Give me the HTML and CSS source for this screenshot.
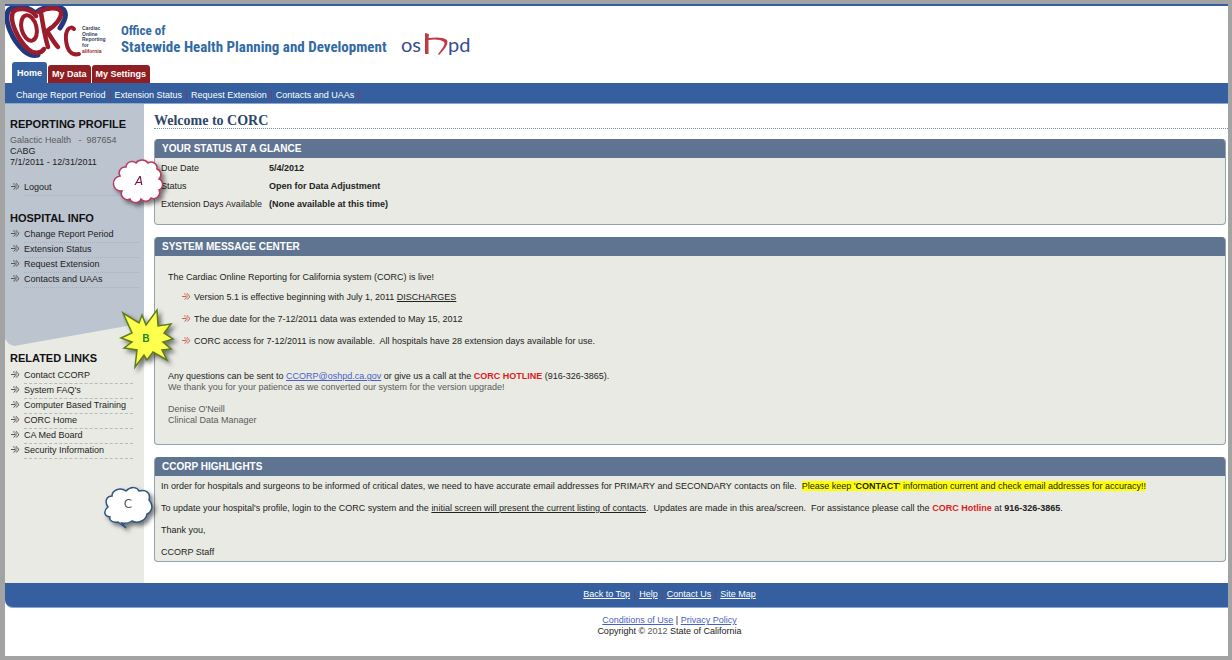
FILE: index.html
```html
<!DOCTYPE html>
<html lang="en">
<head>
<meta charset="utf-8">
<title>CORC - Home</title>
<link rel="stylesheet" href="styles.css">
</head>
<body>
<svg class="defs" aria-hidden="true">
  <symbol id="arrow" viewBox="0 0 9 7">
    <path d="M0 3.5H4" fill="none" stroke="currentColor" stroke-width="1"/>
    <path d="M2.500 .5L5.500 3.500L2.500 6.500M5 .5L8 3.500L5 6.500" fill="none" stroke="currentColor" stroke-width="1.200" stroke-dasharray="1 .6"/>
  </symbol>
</svg>
<div class="page">
  <header class="header">
    <svg class="logo" viewBox="0 0 106 52" role="img" aria-label="CORC logo">
      <g fill="none" stroke-linecap="round" stroke-linejoin="round">
        <path d="M29 6C22 0 7-1 3 5C-1 15 7 34 19 45C24 49 29 50 33 49" stroke="#22397f" stroke-width="5"/>
        <path d="M33 5C41 0 54-1 59 4C62 9 60 14 55 22" stroke="#22397f" stroke-width="5"/>
        <path d="M31 10C26 2 12 1 8 6C4 15 13 34 23 43C28 48 36 48 39 43" stroke="#9c1c2c" stroke-width="4.500"/>
        <ellipse cx="24" cy="22" rx="7.500" ry="13" transform="rotate(-14 24 22)" stroke="#9c1c2c" stroke-width="4"/>
        <path d="M36 7C38 18 39 27 43 41M34 6C43 1 54 1 56 6C57 12 50 20 42 25C46 31 49 37 53 41" stroke="#9c1c2c" stroke-width="4.500"/>
        <path d="M69 23C65 19 60 24 61 34C62 44 66 50 74 48" stroke="#9c1c2c" stroke-width="4"/>
      </g>
      <g class="logo-note">
        <text x="77" y="24">Cardiac</text>
        <text x="77" y="30">Online</text>
        <text x="77" y="35">Reporting</text>
        <text x="77" y="41">for</text>
        <text class="logo-state" x="77" y="47">alifornia</text>
      </g>
    </svg>
    <div class="office"><span class="office-of">Office of</span><span class="office-name">Statewide Health Planning and Development</span></div>
    <svg class="oshpd" viewBox="0 0 76 26" role="img" aria-label="oshpd">
      <text x="0" y="19">os</text>
      <path d="M24 0L28 1L27.500 5C34 4 43 4 46 7C48 11 43 17 38 22L37 21C41 16 45 11 43 9C40 6 32 6 27.500 7V21H24Z" fill="#c03a44"/>
      <text x="47" y="19">pd</text>
    </svg>
  </header>
  <nav class="tabs">
    <a class="tab tab-active" href="#">Home</a>
    <a class="tab" href="#">My Data</a>
    <a class="tab" href="#">My Settings</a>
  </nav>
  <nav class="subnav">
    <a href="#">Change Report Period</a>
    <a href="#">Extension Status</a>
    <a href="#">Request Extension</a>
    <a href="#">Contacts and UAAs</a>
  </nav>
  <div class="columns">
    <aside class="sidebar">
      <div class="profile">
        <h2>REPORTING PROFILE</h2>
        <p class="profile-text"><span class="muted">Galactic Health &nbsp; - &nbsp;987654</span><br>CABG<br>7/1/2011 - 12/31/2011</p>
        <ul class="links logout">
          <li><svg><use href="#arrow"/></svg><a href="#">Logout</a></li>
        </ul>
        <h2>HOSPITAL INFO</h2>
        <ul class="links">
          <li><svg><use href="#arrow"/></svg><a href="#">Change Report Period</a></li>
          <li><svg><use href="#arrow"/></svg><a href="#">Extension Status</a></li>
          <li><svg><use href="#arrow"/></svg><a href="#">Request Extension</a></li>
          <li><svg><use href="#arrow"/></svg><a href="#">Contacts and UAAs</a></li>
        </ul>
      </div>
      <div class="related">
        <h2>RELATED LINKS</h2>
        <ul class="links">
          <li><svg><use href="#arrow"/></svg><a href="#">Contact CCORP</a></li>
          <li><svg><use href="#arrow"/></svg><a href="#">System FAQ's</a></li>
          <li><svg><use href="#arrow"/></svg><a href="#">Computer Based Training</a></li>
          <li><svg><use href="#arrow"/></svg><a href="#">CORC Home</a></li>
          <li><svg><use href="#arrow"/></svg><a href="#">CA Med Board</a></li>
          <li><svg><use href="#arrow"/></svg><a href="#">Security Information</a></li>
        </ul>
      </div>
    </aside>
    <main class="main">
      <h1>Welcome to CORC</h1>
      <section class="panel">
        <h2>YOUR STATUS AT A GLANCE</h2>
        <div class="panel-body status">
          <table>
            <tr><th scope="row">Due Date</th><td>5/4/2012</td></tr>
            <tr><th scope="row">Status</th><td>Open for Data Adjustment</td></tr>
            <tr><th scope="row">Extension Days Available</th><td>(None available at this time)</td></tr>
          </table>
        </div>
      </section>
      <section class="panel">
        <h2>SYSTEM MESSAGE CENTER</h2>
        <div class="panel-body messages">
          <p>The Cardiac Online Reporting for California system (CORC) is live!</p>
          <ul class="bullets">
            <li><svg><use href="#arrow"/></svg><span>Version 5.1 is effective beginning with July 1, 2011 <u>DISCHARGES</u></span></li>
            <li><svg><use href="#arrow"/></svg><span>The due date for the 7-12/2011 data was extended to May 15, 2012</span></li>
            <li><svg><use href="#arrow"/></svg><span>CORC access for 7-12/2011 is now available.&nbsp; All hospitals have 28 extension days available for use.</span></li>
          </ul>
          <p>Any questions can be sent to <a class="link" href="#">CCORP@oshpd.ca.gov</a> or give us a call at the <b class="red">CORC HOTLINE</b> (916-326-3865).<br><span class="muted">We thank you for your patience as we converted our system for the version upgrade!</span></p>
          <p class="muted">Denise O'Neill<br>Clinical Data Manager</p>
        </div>
      </section>
      <section class="panel">
        <h2>CCORP HIGHLIGHTS</h2>
        <div class="panel-body highlights">
          <p>In order for hospitals and surgeons to be informed of critical dates, we need to have accurate email addresses for PRIMARY and SECONDARY contacts on file.&nbsp; <mark>Please keep '<b>CONTACT</b>' information current and check email addresses for accuracy!!</mark></p>
          <p>To update your hospital's profile, login to the CORC system and the <u>initial screen will present the current listing of contacts</u>.&nbsp; Updates are made in this area/screen.&nbsp; For assistance please call the <b class="red">CORC Hotline</b> at <b>916-326-3865</b>.</p>
          <p>Thank you,</p>
          <p>CCORP Staff</p>
        </div>
      </section>
    </main>
  </div>
  <nav class="footer-nav">
    <a href="#">Back to Top</a>
    <a href="#">Help</a>
    <a href="#">Contact Us</a>
    <a href="#">Site Map</a>
  </nav>
  <footer class="legal">
    <div><a class="link" href="#">Conditions of Use</a> | <a class="link" href="#">Privacy Policy</a></div>
    <div>Copyright © <span class="muted">2012</span> State of California</div>
  </footer>

  <svg class="callout callout-a" viewBox="0 0 48 46">
    <path d="M4 17A6 6 0 0 1 10 8A6 6 0 0 1 20 4A7 6 0 0 1 32 4A6 6 0 0 1 41 10A6 6 0 0 1 43 20A6 6 0 0 1 43 31A6 6 0 0 1 35 39A6 6 0 0 1 25 40A6 6 0 0 1 14 40A6 6 0 0 1 6 32A6 6 0 0 1 4 17Z" fill="#fff" stroke="#b93a62" stroke-width="1.500"/>
    <text x="23" y="26">A</text>
  </svg>
  <svg class="callout callout-b" viewBox="0 0 54 62">
    <path d="M3 5L19 15L22 7L26 17L37 2L38 18L51 16L44 25L53 31L43 34L51 41L42 42L47 52L33 44L27 52L24 47L15 59L17 42L4 40L12 34L1 30L12 25Z" fill="#ffff4d" stroke="#5b7d1b" stroke-width="1.500"/>
    <text x="26" y="34">B</text>
  </svg>
  <svg class="callout callout-c" viewBox="0 0 50 44">
    <path d="M5 20C1 14 4 9 9 9C9 3 17 0 23 4C28-1 34 0 36 4C43 2 48 6 46 13C51 18 49 25 44 27C43 34 34 37 29 34C26 36 23 37 19 36L23 41L15 35C9 36 6 33 7 30C1 29 0 24 5 20Z" fill="#fff" stroke="#2e5485" stroke-width="1.500"/>
    <text x="25" y="21">C</text>
  </svg>
</div>
</body>
</html>
```
FILE: styles.css
```css
* { box-sizing: border-box; }

body {
  margin: 0;
  padding: 4px 4px 4px 5px;
  min-height: 100vh;
  display: flex;
  background: #a3a3a3;
  color: #222;
  font: 9px/11px "Liberation Sans", Arial, sans-serif;
}

a { color: inherit; text-decoration: none; }
p, h1, h2, ul { margin: 0; padding: 0; }
ul { list-style: none; }

.defs { position: absolute; width: 0; height: 0; }
.muted { color: #5a5a5a; }
.red { color: #d81e1e; }
.link { color: #4a5fc4; text-decoration: underline; }

.page {
  position: relative;
  flex: 1;
  border-top: 2px solid #355f9e;
  background: #fff;
}

.header {
  display: flex;
  align-items: flex-start;
  height: 56px;
}
.logo { flex: none; width: 106px; height: 52px; }
.logo-note text { font-size: 5px; font-weight: bold; fill: #34405f; }
.logo-note .logo-state { fill: #9c1c2c; }
.office {
  display: flex;
  flex-direction: column;
  margin: 17px 14px 0 10px;
  color: #326aa3;
  font-family: "Liberation Sans Narrow", "Roboto Condensed", "Liberation Sans", sans-serif;
  font-weight: bold;
  line-height: 16px;
}
.office-of { font-size: 13px; }
.office-name { font-size: 15px; }
.oshpd { flex: none; width: 76px; height: 26px; margin-top: 27px; }
.oshpd text { font: 20px Lato, sans-serif; fill: #364c92; }

.tabs {
  display: flex;
  align-items: flex-end;
  gap: 1px;
  padding-left: 7px;
}
.tab {
  padding: 4px 4px 3px;
  border-radius: 3px 3px 0 0;
  background: #8f1f22;
  color: #fff;
  font-size: 9px;
  font-weight: bold;
}
.tab-active { padding: 6px 5px 4px; background: #355f9e; }

.subnav {
  display: flex;
  gap: 4px;
  padding: 7px 11px 2px;
  border-bottom: 1px solid #8ba6cf;
  background: #355f9e;
  color: #fff;
}
.subnav a { padding-right: 4px; border-right: 1px solid #74406a; }

.columns { display: flex; }

.sidebar { flex: none; width: 139px; background: #e9eae4; }
.sidebar h2 { font-size: 11px; line-height: 14px; color: #111; }
.profile {
  height: 242px;
  padding: 13px 5px 0;
  background: #bcc4d0;
  clip-path: polygon(0 0, 100% 0, 100% 219px, 9px 100%, 4px 240px, 0 235px);
}
.profile-text { padding-top: 4px; }
.links { padding-top: 3px; }
.logout { padding-bottom: 15px; }
.profile .logout { padding-top: 13px; }
.related { padding: 5px 11px 0 5px; }
.related .links { padding-top: 4px; }
.links li { display: flex; align-items: flex-start; gap: 4px; }
.links svg { flex: none; width: 9px; height: 7px; margin-left: 1px; margin-top: 2px; color: #555; }
.links a {
  flex: 1;
  padding: 1px 0 2px;
  border-bottom: 1px dashed #b9babb;
  white-space: nowrap;
}
.profile .links a { border-bottom: 1px dotted #abb2bd; }

.main { flex: 1; padding: 10px 0 21px 10px; }
h1 {
  margin-bottom: 10px;
  border-bottom: 1px dotted #7f8d8d;
  color: #2c4768;
  font: bold 14px/14px "Liberation Serif", Georgia, serif;
}
.panel {
  margin-right: 2px;
  border: 1px solid #94a2b0;
  border-top: 0;
  border-radius: 4px;
  background: #e9eae4;
  overflow: hidden;
}
.panel + .panel { margin-top: 12px; }
.panel h2 {
  margin: 0 -1px;
  padding: 3px 8px;
  background: #5f7491;
  color: #fff;
  font-size: 10px;
  line-height: 13px;
}

.status { padding: 1px 6px 11px; }
.status table { border-collapse: collapse; }
.status th, .status td { height: 18px; padding: 0; text-align: left; }
.status th { min-width: 108px; padding-right: 4px; font-weight: normal; }
.status td { font-weight: bold; }

.messages { padding: 16px 13px 18px; }
.messages p + p { margin-top: 11px; }
.bullets { display: grid; gap: 11px; padding: 9px 0 24px 14px; }
.bullets li { display: flex; gap: 3px; }
.bullets svg { flex: none; width: 9px; height: 7px; margin-top: 1px; color: #c8694f; }

.highlights { display: grid; gap: 11px; padding: 5px 6px 3px; }
mark { background: #ff0; color: inherit; }

.footer-nav {
  display: flex;
  justify-content: center;
  gap: 4px;
  padding: 6px 0 7px 106px;
  border-bottom: 1px solid #8ba6cf;
  border-bottom-left-radius: 8px;
  background: #355f9e;
  color: #fff;
}
.footer-nav a { padding-right: 4px; border-right: 1px solid #74406a; text-decoration: underline; }
.footer-nav a:last-child { border-right: 0; padding-right: 0; }

.legal { padding: 7px 0 19px 106px; text-align: center; }

.callout { position: absolute; overflow: visible; filter: drop-shadow(3px 3px 2px rgba(0, 0, 0, .5)); }
.callout text { text-anchor: middle; }
.callout-a { left: 111px; top: 153px; width: 48px; height: 46px; }
.callout-a text { font: italic 12px "DejaVu Sans", sans-serif; fill: #7d1242; }
.callout-b { left: 115px; top: 302px; width: 54px; height: 62px; }
.callout-b text { font: bold 10px "Liberation Sans", sans-serif; fill: #168a1a; }
.callout-c { left: 98px; top: 481px; width: 50px; height: 44px; }
.callout-c text { font: 12px "DejaVu Sans", sans-serif; fill: #555; }
```
